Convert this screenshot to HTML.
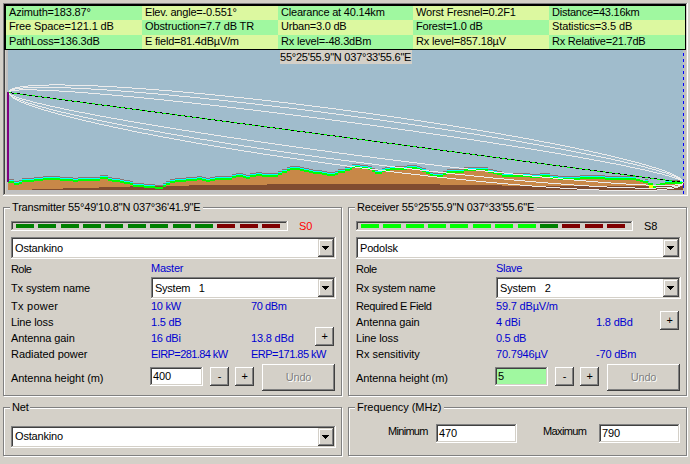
<!DOCTYPE html>
<html><head><meta charset="utf-8"><style>
html,body{margin:0;padding:0;}
body{width:690px;height:464px;overflow:hidden;position:relative;background:#d4d0c8;}
.t{position:absolute;white-space:pre;font-family:'Liberation Sans',sans-serif;font-size:11px;line-height:13px;letter-spacing:-0.18px}
</style></head><body>
<div style="position:absolute;left:3px;top:3px;width:685px;height:193px;background:#ffffff;"></div>
<div style="position:absolute;left:3px;top:3px;width:684px;height:192px;background:#808080;"></div>
<div style="position:absolute;left:4px;top:4px;width:683px;height:191px;background:#d4d0c8;"></div>
<div style="position:absolute;left:4px;top:4px;width:682px;height:190px;background:#404040;"></div>
<div style="position:absolute;left:5px;top:5px;width:681px;height:189px;background:#c0c0c0;"></div>
<div style="position:absolute;left:5px;top:5px;width:1px;height:189px;background:#d4d0c8;"></div>
<svg style="position:absolute;left:0;top:0" width="690" height="464" shape-rendering="crispEdges"><path fill="#a0bccc" d="M8 50h675v1h-675zM8 51h675v1h-675zM8 52h675v1h-675zM8 53h675v1h-675zM8 54h675v1h-675zM8 55h675v1h-675zM8 56h675v1h-675zM8 57h675v1h-675zM8 58h675v1h-675zM8 59h675v1h-675zM8 60h675v1h-675zM8 61h675v1h-675zM8 62h675v1h-675zM8 63h675v1h-675zM8 64h675v1h-675zM8 65h675v1h-675zM8 66h675v1h-675zM8 67h675v1h-675zM8 68h675v1h-675zM8 69h675v1h-675zM8 70h675v1h-675zM8 71h675v1h-675zM8 72h675v1h-675zM8 73h675v1h-675zM8 74h675v1h-675zM8 75h675v1h-675zM8 76h675v1h-675zM8 77h675v1h-675zM8 78h675v1h-675zM8 79h675v1h-675zM8 80h675v1h-675zM8 81h675v1h-675zM8 82h675v1h-675zM8 83h675v1h-675zM8 84h41v1h-41zM65 84h618v1h-618zM8 85h20v1h-20zM49 85h16v1h-16zM98 85h585v1h-585zM8 86h12v1h-12zM28 86h70v1h-70zM117 86h566v1h-566zM8 87h7v1h-7zM20 87h3v1h-3zM71 87h46v1h-46zM132 87h551v1h-551zM8 88h4v1h-4zM23 88h48v1h-48zM91 88h41v1h-41zM146 88h537v1h-537zM8 89h2v1h-2zM15 89h4v1h-4zM37 89h54v1h-54zM107 89h39v1h-39zM159 89h524v1h-524zM8 90h1v1h-1zM19 90h18v1h-18zM59 90h48v1h-48zM121 90h38v1h-38zM172 90h511v1h-511zM8 91h1v1h-1zM11 91h48v1h-48zM75 91h46v1h-46zM134 91h38v1h-38zM183 91h500v1h-500zM12 92h63v1h-63zM88 92h46v1h-46zM146 92h37v1h-37zM194 92h489v1h-489zM10 93h2v1h-2zM20 93h68v1h-68zM100 93h46v1h-46zM158 93h36v1h-36zM205 93h478v1h-478zM11 94h9v1h-9zM27 94h73v1h-73zM112 94h46v1h-46zM169 94h36v1h-36zM215 94h468v1h-468zM9 95h1v1h-1zM14 95h13v1h-13zM35 95h77v1h-77zM123 95h46v1h-46zM179 95h36v1h-36zM225 95h458v1h-458zM9 96h2v1h-2zM13 96h1v1h-1zM16 96h19v1h-19zM42 96h81v1h-81zM134 96h45v1h-45zM190 96h35v1h-35zM234 96h449v1h-449zM9 97h3v1h-3zM15 97h1v1h-1zM19 97h23v1h-23zM50 97h84v1h-84zM144 97h46v1h-46zM200 97h34v1h-34zM244 97h439v1h-439zM9 98h4v1h-4zM17 98h2v1h-2zM22 98h28v1h-28zM57 98h87v1h-87zM154 98h46v1h-46zM209 98h35v1h-35zM253 98h430v1h-430zM9 99h6v1h-6zM20 99h2v1h-2zM26 99h31v1h-31zM65 99h89v1h-89zM164 99h45v1h-45zM219 99h34v1h-34zM262 99h421v1h-421zM9 100h8v1h-8zM19 100h1v1h-1zM23 100h3v1h-3zM30 100h35v1h-35zM72 100h92v1h-92zM173 100h46v1h-46zM228 100h34v1h-34zM271 100h412v1h-412zM9 101h10v1h-10zM21 101h2v1h-2zM25 101h5v1h-5zM33 101h39v1h-39zM80 101h93v1h-93zM183 101h45v1h-45zM237 101h34v1h-34zM279 101h404v1h-404zM9 102h12v1h-12zM24 102h1v1h-1zM28 102h5v1h-5zM37 102h43v1h-43zM87 102h96v1h-96zM192 102h45v1h-45zM246 102h33v1h-33zM288 102h395v1h-395zM9 103h15v1h-15zM26 103h2v1h-2zM32 103h5v1h-5zM42 103h45v1h-45zM95 103h97v1h-97zM201 103h45v1h-45zM255 103h33v1h-33zM296 103h387v1h-387zM9 104h17v1h-17zM29 104h3v1h-3zM35 104h7v1h-7zM46 104h49v1h-49zM102 104h99v1h-99zM210 104h45v1h-45zM263 104h33v1h-33zM304 104h379v1h-379zM9 105h20v1h-20zM32 105h3v1h-3zM38 105h8v1h-8zM50 105h52v1h-52zM110 105h100v1h-100zM219 105h44v1h-44zM272 105h32v1h-32zM312 105h371v1h-371zM9 106h23v1h-23zM35 106h3v1h-3zM42 106h8v1h-8zM55 106h55v1h-55zM117 106h102v1h-102zM227 106h45v1h-45zM280 106h32v1h-32zM320 106h363v1h-363zM9 107h26v1h-26zM38 107h4v1h-4zM46 107h9v1h-9zM60 107h57v1h-57zM125 107h102v1h-102zM236 107h44v1h-44zM289 107h31v1h-31zM328 107h355v1h-355zM9 108h29v1h-29zM41 108h5v1h-5zM49 108h11v1h-11zM64 108h61v1h-61zM132 108h104v1h-104zM244 108h45v1h-45zM297 108h31v1h-31zM336 108h347v1h-347zM9 109h32v1h-32zM44 109h5v1h-5zM53 109h11v1h-11zM69 109h63v1h-63zM140 109h104v1h-104zM253 109h44v1h-44zM305 109h31v1h-31zM343 109h340v1h-340zM9 110h35v1h-35zM48 110h5v1h-5zM57 110h12v1h-12zM74 110h66v1h-66zM147 110h106v1h-106zM261 110h44v1h-44zM313 110h30v1h-30zM351 110h332v1h-332zM9 111h39v1h-39zM51 111h6v1h-6zM61 111h13v1h-13zM79 111h68v1h-68zM155 111h106v1h-106zM269 111h44v1h-44zM321 111h30v1h-30zM358 111h325v1h-325zM9 112h42v1h-42zM55 112h6v1h-6zM66 112h13v1h-13zM85 112h70v1h-70zM162 112h107v1h-107zM277 112h44v1h-44zM328 112h30v1h-30zM366 112h317v1h-317zM9 113h46v1h-46zM58 113h8v1h-8zM70 113h15v1h-15zM90 113h72v1h-72zM170 113h107v1h-107zM285 113h43v1h-43zM336 113h30v1h-30zM373 113h310v1h-310zM9 114h49v1h-49zM62 114h8v1h-8zM74 114h16v1h-16zM95 114h75v1h-75zM177 114h108v1h-108zM293 114h43v1h-43zM344 114h29v1h-29zM380 114h303v1h-303zM9 115h53v1h-53zM66 115h8v1h-8zM79 115h16v1h-16zM100 115h77v1h-77zM185 115h108v1h-108zM301 115h43v1h-43zM351 115h29v1h-29zM387 115h296v1h-296zM9 116h57v1h-57zM70 116h9v1h-9zM83 116h17v1h-17zM106 116h79v1h-79zM192 116h109v1h-109zM309 116h42v1h-42zM358 116h29v1h-29zM394 116h289v1h-289zM9 117h61v1h-61zM74 117h9v1h-9zM88 117h18v1h-18zM111 117h81v1h-81zM200 117h109v1h-109zM317 117h41v1h-41zM366 117h28v1h-28zM401 117h282v1h-282zM9 118h65v1h-65zM78 118h10v1h-10zM93 118h18v1h-18zM117 118h83v1h-83zM207 118h110v1h-110zM325 118h41v1h-41zM373 118h28v1h-28zM407 118h276v1h-276zM9 119h69v1h-69zM82 119h11v1h-11zM97 119h20v1h-20zM123 119h84v1h-84zM215 119h110v1h-110zM332 119h41v1h-41zM380 119h27v1h-27zM414 119h269v1h-269zM9 120h73v1h-73zM86 120h11v1h-11zM102 120h21v1h-21zM128 120h87v1h-87zM222 120h110v1h-110zM340 120h40v1h-40zM387 120h27v1h-27zM421 120h262v1h-262zM9 121h77v1h-77zM91 121h11v1h-11zM107 121h21v1h-21zM134 121h88v1h-88zM230 121h110v1h-110zM347 121h40v1h-40zM394 121h27v1h-27zM427 121h256v1h-256zM9 122h82v1h-82zM95 122h12v1h-12zM112 122h22v1h-22zM140 122h90v1h-90zM237 122h110v1h-110zM355 122h39v1h-39zM401 122h26v1h-26zM434 122h249v1h-249zM9 123h86v1h-86zM99 123h13v1h-13zM117 123h23v1h-23zM146 123h91v1h-91zM245 123h110v1h-110zM362 123h39v1h-39zM408 123h26v1h-26zM440 123h243v1h-243zM9 124h90v1h-90zM104 124h13v1h-13zM122 124h24v1h-24zM152 124h93v1h-93zM252 124h110v1h-110zM370 124h38v1h-38zM415 124h25v1h-25zM447 124h236v1h-236zM9 125h95v1h-95zM109 125h13v1h-13zM127 125h25v1h-25zM158 125h94v1h-94zM260 125h110v1h-110zM377 125h38v1h-38zM422 125h25v1h-25zM453 125h230v1h-230zM9 126h100v1h-100zM113 126h14v1h-14zM133 126h25v1h-25zM164 126h96v1h-96zM267 126h110v1h-110zM384 126h38v1h-38zM428 126h25v1h-25zM459 126h224v1h-224zM9 127h104v1h-104zM118 127h15v1h-15zM138 127h26v1h-26zM170 127h97v1h-97zM275 127h109v1h-109zM391 127h37v1h-37zM435 127h24v1h-24zM465 127h218v1h-218zM9 128h109v1h-109zM123 128h15v1h-15zM143 128h27v1h-27zM176 128h99v1h-99zM282 128h109v1h-109zM398 128h37v1h-37zM442 128h23v1h-23zM471 128h212v1h-212zM9 129h114v1h-114zM128 129h15v1h-15zM149 129h27v1h-27zM182 129h100v1h-100zM290 129h108v1h-108zM405 129h37v1h-37zM448 129h23v1h-23zM477 129h206v1h-206zM9 130h119v1h-119zM132 130h17v1h-17zM154 130h28v1h-28zM189 130h101v1h-101zM297 130h108v1h-108zM413 130h35v1h-35zM455 130h22v1h-22zM483 130h200v1h-200zM9 131h123v1h-123zM137 131h17v1h-17zM160 131h29v1h-29zM195 131h102v1h-102zM305 131h108v1h-108zM419 131h36v1h-36zM461 131h22v1h-22zM489 131h194v1h-194zM9 132h128v1h-128zM142 132h18v1h-18zM165 132h30v1h-30zM201 132h104v1h-104zM312 132h107v1h-107zM426 132h35v1h-35zM467 132h22v1h-22zM495 132h188v1h-188zM9 133h133v1h-133zM148 133h17v1h-17zM171 133h30v1h-30zM208 133h104v1h-104zM320 133h106v1h-106zM433 133h34v1h-34zM474 133h21v1h-21zM501 133h182v1h-182zM9 134h139v1h-139zM153 134h18v1h-18zM177 134h31v1h-31zM214 134h106v1h-106zM327 134h106v1h-106zM440 134h34v1h-34zM480 134h21v1h-21zM506 134h177v1h-177zM9 135h144v1h-144zM158 135h19v1h-19zM183 135h31v1h-31zM221 135h106v1h-106zM335 135h105v1h-105zM447 135h33v1h-33zM486 135h20v1h-20zM512 135h171v1h-171zM9 136h149v1h-149zM163 136h20v1h-20zM189 136h32v1h-32zM227 136h108v1h-108zM342 136h105v1h-105zM454 136h32v1h-32zM492 136h20v1h-20zM518 136h165v1h-165zM9 137h154v1h-154zM169 137h20v1h-20zM194 137h33v1h-33zM234 137h108v1h-108zM350 137h104v1h-104zM460 137h32v1h-32zM498 137h20v1h-20zM523 137h160v1h-160zM9 138h160v1h-160zM174 138h20v1h-20zM200 138h34v1h-34zM241 138h109v1h-109zM357 138h103v1h-103zM467 138h31v1h-31zM504 138h19v1h-19zM529 138h154v1h-154zM9 139h165v1h-165zM180 139h20v1h-20zM207 139h34v1h-34zM247 139h110v1h-110zM365 139h102v1h-102zM474 139h30v1h-30zM510 139h19v1h-19zM534 139h149v1h-149zM9 140h171v1h-171zM185 140h22v1h-22zM213 140h34v1h-34zM254 140h111v1h-111zM372 140h102v1h-102zM480 140h30v1h-30zM516 140h18v1h-18zM539 140h144v1h-144zM9 141h176v1h-176zM191 141h22v1h-22zM219 141h35v1h-35zM261 141h111v1h-111zM380 141h100v1h-100zM487 141h29v1h-29zM522 141h17v1h-17zM544 141h139v1h-139zM9 142h182v1h-182zM196 142h23v1h-23zM225 142h36v1h-36zM268 142h112v1h-112zM387 142h100v1h-100zM493 142h29v1h-29zM527 142h17v1h-17zM550 142h133v1h-133zM9 143h187v1h-187zM202 143h23v1h-23zM231 143h37v1h-37zM275 143h112v1h-112zM395 143h98v1h-98zM499 143h28v1h-28zM533 143h17v1h-17zM555 143h128v1h-128zM9 144h193v1h-193zM208 144h23v1h-23zM238 144h37v1h-37zM282 144h113v1h-113zM402 144h97v1h-97zM506 144h27v1h-27zM539 144h16v1h-16zM560 144h123v1h-123zM9 145h199v1h-199zM214 145h24v1h-24zM244 145h38v1h-38zM289 145h113v1h-113zM410 145h96v1h-96zM512 145h27v1h-27zM544 145h16v1h-16zM565 145h118v1h-118zM9 146h205v1h-205zM220 146h24v1h-24zM251 146h38v1h-38zM296 146h114v1h-114zM417 146h95v1h-95zM518 146h26v1h-26zM550 146h15v1h-15zM570 146h113v1h-113zM9 147h211v1h-211zM226 147h25v1h-25zM257 147h39v1h-39zM303 147h114v1h-114zM425 147h93v1h-93zM525 147h25v1h-25zM555 147h15v1h-15zM575 147h108v1h-108zM9 148h217v1h-217zM232 148h25v1h-25zM264 148h39v1h-39zM310 148h115v1h-115zM432 148h93v1h-93zM531 148h24v1h-24zM561 148h14v1h-14zM579 148h104v1h-104zM9 149h223v1h-223zM238 149h26v1h-26zM270 149h40v1h-40zM317 149h115v1h-115zM440 149h91v1h-91zM537 149h24v1h-24zM566 149h13v1h-13zM584 149h99v1h-99zM9 150h229v1h-229zM244 150h26v1h-26zM277 150h40v1h-40zM325 150h115v1h-115zM447 150h90v1h-90zM543 150h23v1h-23zM571 150h13v1h-13zM589 150h94v1h-94zM9 151h235v1h-235zM251 151h26v1h-26zM284 151h41v1h-41zM332 151h115v1h-115zM455 151h88v1h-88zM549 151h22v1h-22zM576 151h13v1h-13zM593 151h90v1h-90zM9 152h242v1h-242zM257 152h27v1h-27zM291 152h41v1h-41zM339 152h116v1h-116zM462 152h87v1h-87zM555 152h21v1h-21zM581 152h12v1h-12zM598 152h85v1h-85zM9 153h248v1h-248zM263 153h28v1h-28zM298 153h41v1h-41zM347 153h115v1h-115zM470 153h85v1h-85zM561 153h20v1h-20zM586 153h12v1h-12zM602 153h81v1h-81zM9 154h254v1h-254zM270 154h28v1h-28zM305 154h42v1h-42zM354 154h116v1h-116zM477 154h84v1h-84zM566 154h20v1h-20zM591 154h11v1h-11zM607 154h76v1h-76zM9 155h261v1h-261zM277 155h28v1h-28zM312 155h42v1h-42zM362 155h115v1h-115zM485 155h81v1h-81zM572 155h19v1h-19zM596 155h11v1h-11zM611 155h72v1h-72zM9 156h268v1h-268zM283 156h29v1h-29zM319 156h43v1h-43zM370 156h115v1h-115zM492 156h80v1h-80zM578 156h18v1h-18zM601 156h10v1h-10zM615 156h68v1h-68zM9 157h274v1h-274zM290 157h29v1h-29zM326 157h44v1h-44zM377 157h115v1h-115zM500 157h78v1h-78zM583 157h18v1h-18zM606 157h9v1h-9zM619 157h64v1h-64zM9 158h281v1h-281zM297 158h29v1h-29zM334 158h43v1h-43zM385 158h115v1h-115zM507 158h76v1h-76zM589 158h17v1h-17zM611 158h8v1h-8zM623 158h60v1h-60zM9 159h288v1h-288zM304 159h30v1h-30zM341 159h44v1h-44zM393 159h114v1h-114zM515 159h74v1h-74zM594 159h17v1h-17zM615 159h8v1h-8zM627 159h56v1h-56zM9 160h295v1h-295zM311 160h30v1h-30zM349 160h44v1h-44zM401 160h114v1h-114zM522 160h72v1h-72zM600 160h15v1h-15zM620 160h7v1h-7zM631 160h52v1h-52zM9 161h302v1h-302zM318 161h31v1h-31zM356 161h45v1h-45zM409 161h113v1h-113zM530 161h70v1h-70zM605 161h15v1h-15zM624 161h7v1h-7zM635 161h48v1h-48zM9 162h309v1h-309zM325 162h31v1h-31zM364 162h45v1h-45zM417 162h113v1h-113zM537 162h68v1h-68zM610 162h14v1h-14zM628 162h7v1h-7zM639 162h44v1h-44zM9 163h316v1h-316zM332 163h32v1h-32zM372 163h45v1h-45zM425 163h112v1h-112zM545 163h65v1h-65zM616 163h12v1h-12zM633 163h6v1h-6zM642 163h41v1h-41zM9 164h323v1h-323zM340 164h12v1h-12zM360 164h12v1h-12zM379 164h46v1h-46zM434 164h111v1h-111zM552 164h64v1h-64zM621 164h12v1h-12zM637 164h5v1h-5zM646 164h37v1h-37zM9 165h331v1h-331zM347 165h5v1h-5zM368 165h11v1h-11zM387 165h20v1h-20zM417 165h17v1h-17zM442 165h110v1h-110zM560 165h61v1h-61zM626 165h11v1h-11zM641 165h5v1h-5zM649 165h34v1h-34zM9 166h281v1h-281zM300 166h47v1h-47zM372 166h15v1h-15zM420 166h22v1h-22zM450 166h110v1h-110zM567 166h59v1h-59zM630 166h11v1h-11zM645 166h4v1h-4zM652 166h31v1h-31zM9 167h278v1h-278zM304 167h41v1h-41zM372 167h13v1h-13zM422 167h28v1h-28zM459 167h5v1h-5zM488 167h79v1h-79zM575 167h55v1h-55zM635 167h10v1h-10zM648 167h4v1h-4zM656 167h27v1h-27zM9 168h278v1h-278zM309 168h36v1h-36zM375 168h7v1h-7zM426 168h33v1h-33zM488 168h87v1h-87zM582 168h53v1h-53zM640 168h8v1h-8zM652 168h4v1h-4zM659 168h24v1h-24zM9 169h273v1h-273zM313 169h25v1h-25zM378 169h4v1h-4zM426 169h21v1h-21zM493 169h89v1h-89zM590 169h50v1h-50zM645 169h7v1h-7zM656 169h3v1h-3zM662 169h21v1h-21zM9 170h273v1h-273zM322 170h16v1h-16zM430 170h17v1h-17zM497 170h93v1h-93zM597 170h48v1h-48zM649 170h7v1h-7zM659 170h3v1h-3zM665 170h18v1h-18zM9 171h269v1h-269zM327 171h8v1h-8zM438 171h5v1h-5zM502 171h95v1h-95zM605 171h44v1h-44zM653 171h6v1h-6zM662 171h3v1h-3zM667 171h16v1h-16zM9 172h247v1h-247zM262 172h16v1h-16zM433 172h5v1h-5zM504 172h101v1h-101zM612 172h41v1h-41zM657 172h5v1h-5zM666 172h1v1h-1zM670 172h13v1h-13zM9 173h227v1h-227zM243 173h7v1h-7zM530 173h10v1h-10zM550 173h62v1h-62zM620 173h37v1h-37zM662 173h4v1h-4zM669 173h1v1h-1zM672 173h11v1h-11zM9 174h223v1h-223zM246 174h4v1h-4zM550 174h70v1h-70zM627 174h35v1h-35zM665 174h4v1h-4zM671 174h1v1h-1zM674 174h9v1h-9zM9 175h91v1h-91zM108 175h124v1h-124zM558 175h22v1h-22zM605 175h22v1h-22zM635 175h30v1h-30zM669 175h2v1h-2zM676 175h7v1h-7zM9 176h34v1h-34zM60 176h40v1h-40zM108 176h89v1h-89zM202 176h13v1h-13zM642 176h27v1h-27zM672 176h2v1h-2zM678 176h5v1h-5zM9 177h25v1h-25zM73 177h5v1h-5zM112 177h74v1h-74zM206 177h4v1h-4zM636 177h6v1h-6zM650 177h22v1h-22zM675 177h1v1h-1zM680 177h3v1h-3zM9 178h13v1h-13zM120 178h55v1h-55zM636 178h14v1h-14zM657 178h18v1h-18zM681 178h2v1h-2zM14 179h8v1h-8zM124 179h46v1h-46zM640 179h5v1h-5zM648 179h9v1h-9zM665 179h13v1h-13zM682 179h1v1h-1zM14 180h5v1h-5zM130 180h40v1h-40zM643 180h2v1h-2zM648 180h17v1h-17zM133 181h33v1h-33zM649 181h16v1h-16zM133 182h33v1h-33zM649 182h16v1h-16zM144 183h19v1h-19zM653 183h7v1h-7zM155 184h8v1h-8zM653 184h3v1h-3z"/><path fill="#8c7474" d="M352 164h8v1h-8zM360 165h8v1h-8zM407 165h10v1h-10zM290 166h10v1h-10zM368 166h4v1h-4zM395 166h12v1h-12zM417 166h3v1h-3zM287 167h3v1h-3zM300 167h4v1h-4zM345 167h5v1h-5zM385 167h5v1h-5zM420 167h2v1h-2zM464 167h24v1h-24zM304 168h5v1h-5zM372 168h3v1h-3zM382 168h3v1h-3zM422 168h4v1h-4zM282 169h5v1h-5zM309 169h4v1h-4zM338 169h7v1h-7zM447 169h17v1h-17zM488 169h5v1h-5zM313 170h9v1h-9zM375 170h3v1h-3zM429 170h1v1h-1zM493 170h4v1h-4zM278 171h4v1h-4zM322 171h5v1h-5zM335 171h3v1h-3zM443 171h4v1h-4zM497 171h5v1h-5zM256 172h6v1h-6zM327 172h8v1h-8zM430 172h3v1h-3zM236 173h7v1h-7zM250 173h6v1h-6zM262 173h16v1h-16zM433 173h10v1h-10zM502 173h2v1h-2zM513 173h17v1h-17zM540 173h10v1h-10zM232 174h4v1h-4zM243 174h3v1h-3zM530 174h10v1h-10zM100 175h8v1h-8zM246 175h4v1h-4zM550 175h8v1h-8zM580 175h25v1h-25zM43 176h17v1h-17zM197 176h5v1h-5zM215 176h17v1h-17zM558 176h22v1h-22zM605 176h30v1h-30zM34 177h9v1h-9zM60 177h13v1h-13zM78 177h22v1h-22zM108 177h4v1h-4zM186 177h11v1h-11zM202 177h4v1h-4zM210 177h5v1h-5zM22 178h12v1h-12zM73 178h5v1h-5zM112 178h8v1h-8zM175 178h11v1h-11zM206 178h4v1h-4zM9 179h5v1h-5zM120 179h4v1h-4zM170 179h5v1h-5zM645 179h3v1h-3zM19 180h3v1h-3zM124 180h6v1h-6zM672 180h8v1h-8zM14 181h5v1h-5zM130 181h3v1h-3zM166 181h4v1h-4zM648 181h1v1h-1zM133 183h11v1h-11zM163 183h3v1h-3zM144 184h11v1h-11zM155 185h8v1h-8z"/><path fill="#00ffff" d="M352 165h8v1h-8zM360 166h8v1h-8zM407 166h10v1h-10zM290 167h10v1h-10zM350 167h2v1h-2zM368 167h4v1h-4zM390 167h5v1h-5zM404 167h3v1h-3zM417 167h3v1h-3zM287 168h3v1h-3zM300 168h4v1h-4zM345 168h5v1h-5zM385 168h5v1h-5zM420 168h2v1h-2zM468 168h20v1h-20zM304 169h5v1h-5zM382 169h3v1h-3zM422 169h4v1h-4zM282 170h5v1h-5zM309 170h4v1h-4zM338 170h7v1h-7zM447 170h17v1h-17zM488 170h5v1h-5zM313 171h9v1h-9zM375 171h7v1h-7zM426 171h3v1h-3zM494 171h3v1h-3zM278 172h4v1h-4zM322 172h5v1h-5zM335 172h3v1h-3zM446 172h1v1h-1zM256 173h6v1h-6zM327 173h8v1h-8zM430 173h3v1h-3zM236 174h7v1h-7zM250 174h6v1h-6zM262 174h16v1h-16zM433 174h10v1h-10zM502 174h11v1h-11zM523 174h7v1h-7zM540 174h10v1h-10zM232 175h4v1h-4zM243 175h3v1h-3zM532 175h8v1h-8zM100 176h8v1h-8zM246 176h4v1h-4zM550 176h8v1h-8zM580 176h25v1h-25zM43 177h17v1h-17zM197 177h5v1h-5zM215 177h17v1h-17zM558 177h22v1h-22zM605 177h31v1h-31zM34 178h9v1h-9zM60 178h13v1h-13zM78 178h22v1h-22zM108 178h4v1h-4zM186 178h11v1h-11zM202 178h4v1h-4zM210 178h5v1h-5zM22 179h12v1h-12zM73 179h5v1h-5zM112 179h8v1h-8zM175 179h11v1h-11zM206 179h4v1h-4zM9 180h5v1h-5zM120 180h4v1h-4zM170 180h5v1h-5zM645 180h3v1h-3zM19 181h3v1h-3zM124 181h6v1h-6zM665 181h7v1h-7zM680 181h2v1h-2zM14 182h5v1h-5zM130 182h3v1h-3zM166 182h4v1h-4zM648 182h1v1h-1zM133 184h11v1h-11zM163 184h3v1h-3zM144 185h11v1h-11z"/><path fill="#c88848" d="M352 168h8v1h-8zM352 169h16v1h-16zM407 169h5v1h-5zM290 170h10v1h-10zM350 170h22v1h-22zM390 170h30v1h-30zM287 171h17v1h-17zM345 171h27v1h-27zM385 171h1v1h-1zM394 171h28v1h-28zM464 171h21v1h-21zM287 172h22v1h-22zM345 172h30v1h-30zM382 172h12v1h-12zM402 172h24v1h-24zM464 172h24v1h-24zM282 173h31v1h-31zM338 173h37v1h-37zM382 173h20v1h-20zM411 173h15v1h-15zM455 173h38v1h-38zM282 174h40v1h-40zM338 174h73v1h-73zM420 174h10v1h-10zM447 174h8v1h-8zM465 174h32v1h-32zM278 175h49v1h-49zM335 175h85v1h-85zM428 175h2v1h-2zM443 175h22v1h-22zM474 175h28v1h-28zM256 176h6v1h-6zM278 176h150v1h-150zM443 176h31v1h-31zM484 176h18v1h-18zM236 177h7v1h-7zM250 177h187v1h-187zM447 177h37v1h-37zM493 177h37v1h-37zM540 177h2v1h-2zM232 178h14v1h-14zM250 178h197v1h-197zM456 178h37v1h-37zM504 178h46v1h-46zM100 179h8v1h-8zM232 179h224v1h-224zM466 179h38v1h-38zM514 179h44v1h-44zM580 179h25v1h-25zM43 180h17v1h-17zM100 180h8v1h-8zM197 180h5v1h-5zM215 180h251v1h-251zM476 180h38v1h-38zM525 180h49v1h-49zM586 180h50v1h-50zM34 181h39v1h-39zM78 181h34v1h-34zM186 181h20v1h-20zM210 181h266v1h-266zM486 181h39v1h-39zM536 181h50v1h-50zM598 181h42v1h-42zM22 182h98v1h-98zM175 182h311v1h-311zM497 182h39v1h-39zM548 182h50v1h-50zM611 182h32v1h-32zM8 183h6v1h-6zM22 183h102v1h-102zM170 183h327v1h-327zM508 183h40v1h-40zM561 183h50v1h-50zM626 183h22v1h-22zM8 184h6v1h-6zM19 184h111v1h-111zM170 184h97v1h-97zM440 184h68v1h-68zM520 184h41v1h-41zM574 184h52v1h-52zM646 184h2v1h-2zM665 184h10v1h-10zM8 185h125v1h-125zM166 185h23v1h-23zM502 185h18v1h-18zM532 185h42v1h-42zM589 185h57v1h-57zM675 185h3v1h-3zM682 185h1v1h-1zM8 186h122v1h-122zM8 187h91v1h-91zM8 188h55v1h-55zM8 189h24v1h-24z"/><path fill="#00ff00" d="M9 92h2v1h-2zM14 93h3v1h-3zM20 94h3v1h-3zM26 94h1v1h-1zM27 95h2v1h-2zM32 95h3v1h-3zM38 96h3v1h-3zM44 97h3v1h-3zM50 98h3v1h-3zM56 98h1v1h-1zM57 99h2v1h-2zM62 99h3v1h-3zM68 100h3v1h-3zM74 101h3v1h-3zM80 102h3v1h-3zM86 102h1v1h-1zM87 103h2v1h-2zM92 103h3v1h-3zM98 104h3v1h-3zM104 105h3v1h-3zM110 106h3v1h-3zM116 106h1v1h-1zM117 107h2v1h-2zM121 107h3v1h-3zM127 108h3v1h-3zM133 109h3v1h-3zM139 109h1v1h-1zM140 110h2v1h-2zM145 110h2v1h-2zM147 111h1v1h-1zM151 111h3v1h-3zM157 112h3v1h-3zM163 113h3v1h-3zM169 113h1v1h-1zM170 114h2v1h-2zM175 114h2v1h-2zM177 115h1v1h-1zM181 115h3v1h-3zM187 116h3v1h-3zM193 117h3v1h-3zM199 117h1v1h-1zM200 118h2v1h-2zM205 118h2v1h-2zM207 119h1v1h-1zM211 119h3v1h-3zM217 120h3v1h-3zM223 121h3v1h-3zM229 121h1v1h-1zM230 122h1v1h-1zM234 122h3v1h-3zM240 123h3v1h-3zM246 124h3v1h-3zM252 125h3v1h-3zM258 125h2v1h-2zM260 126h1v1h-1zM264 126h3v1h-3zM270 127h3v1h-3zM276 128h3v1h-3zM282 129h3v1h-3zM288 129h2v1h-2zM290 130h1v1h-1zM294 130h3v1h-3zM300 131h3v1h-3zM306 132h3v1h-3zM312 133h3v1h-3zM318 133h2v1h-2zM320 134h1v1h-1zM324 134h3v1h-3zM330 135h3v1h-3zM336 136h3v1h-3zM342 137h2v1h-2zM347 137h3v1h-3zM353 138h3v1h-3zM359 139h3v1h-3zM365 140h3v1h-3zM371 140h1v1h-1zM372 141h2v1h-2zM377 141h3v1h-3zM383 142h3v1h-3zM389 143h3v1h-3zM395 144h3v1h-3zM401 144h1v1h-1zM402 145h2v1h-2zM407 145h3v1h-3zM413 146h3v1h-3zM419 147h3v1h-3zM425 148h3v1h-3zM431 148h1v1h-1zM432 149h2v1h-2zM437 149h3v1h-3zM443 150h3v1h-3zM449 151h3v1h-3zM454 151h1v1h-1zM455 152h2v1h-2zM460 152h2v1h-2zM462 153h1v1h-1zM466 153h3v1h-3zM472 154h3v1h-3zM478 155h3v1h-3zM484 155h1v1h-1zM485 156h2v1h-2zM490 156h2v1h-2zM492 157h1v1h-1zM496 157h3v1h-3zM502 158h3v1h-3zM508 159h3v1h-3zM514 159h1v1h-1zM515 160h2v1h-2zM520 160h2v1h-2zM522 161h1v1h-1zM526 161h3v1h-3zM532 162h3v1h-3zM538 163h3v1h-3zM544 163h1v1h-1zM545 164h2v1h-2zM550 164h2v1h-2zM552 165h1v1h-1zM556 165h3v1h-3zM355 166h5v1h-5zM562 166h2v1h-2zM352 167h3v1h-3zM362 167h6v1h-6zM407 167h10v1h-10zM567 167h3v1h-3zM573 167h2v1h-2zM290 168h10v1h-10zM350 168h2v1h-2zM360 168h2v1h-2zM370 168h2v1h-2zM390 168h14v1h-14zM412 168h8v1h-8zM575 168h1v1h-1zM579 168h3v1h-3zM287 169h17v1h-17zM345 169h7v1h-7zM368 169h2v1h-2zM385 169h22v1h-22zM420 169h2v1h-2zM464 169h4v1h-4zM476 169h12v1h-12zM585 169h3v1h-3zM287 170h3v1h-3zM300 170h9v1h-9zM345 170h5v1h-5zM372 170h3v1h-3zM386 170h4v1h-4zM464 170h12v1h-12zM485 170h3v1h-3zM591 170h3v1h-3zM282 171h5v1h-5zM304 171h9v1h-9zM338 171h7v1h-7zM372 171h3v1h-3zM382 171h3v1h-3zM422 171h4v1h-4zM447 171h17v1h-17zM597 171h3v1h-3zM603 171h2v1h-2zM282 172h5v1h-5zM309 172h13v1h-13zM338 172h7v1h-7zM375 172h7v1h-7zM426 172h4v1h-4zM447 172h17v1h-17zM488 172h6v1h-6zM605 172h1v1h-1zM609 172h3v1h-3zM278 173h4v1h-4zM313 173h14v1h-14zM335 173h3v1h-3zM375 173h7v1h-7zM426 173h4v1h-4zM443 173h3v1h-3zM493 173h9v1h-9zM615 173h3v1h-3zM256 174h6v1h-6zM278 174h4v1h-4zM322 174h16v1h-16zM430 174h3v1h-3zM443 174h4v1h-4zM497 174h5v1h-5zM621 174h3v1h-3zM236 175h7v1h-7zM250 175h28v1h-28zM327 175h8v1h-8zM430 175h13v1h-13zM502 175h21v1h-21zM540 175h10v1h-10zM627 175h3v1h-3zM633 175h2v1h-2zM232 176h14v1h-14zM250 176h6v1h-6zM262 176h16v1h-16zM437 176h6v1h-6zM502 176h30v1h-30zM542 176h8v1h-8zM635 176h1v1h-1zM639 176h3v1h-3zM100 177h8v1h-8zM232 177h4v1h-4zM243 177h7v1h-7zM530 177h10v1h-10zM553 177h5v1h-5zM580 177h25v1h-25zM645 177h3v1h-3zM43 178h17v1h-17zM100 178h8v1h-8zM197 178h5v1h-5zM215 178h17v1h-17zM246 178h4v1h-4zM550 178h3v1h-3zM563 178h73v1h-73zM651 178h3v1h-3zM34 179h39v1h-39zM78 179h22v1h-22zM108 179h4v1h-4zM186 179h20v1h-20zM210 179h22v1h-22zM558 179h5v1h-5zM574 179h6v1h-6zM605 179h35v1h-35zM657 179h3v1h-3zM663 179h2v1h-2zM22 180h21v1h-21zM60 180h40v1h-40zM108 180h12v1h-12zM175 180h22v1h-22zM202 180h13v1h-13zM636 180h7v1h-7zM665 180h1v1h-1zM669 180h3v1h-3zM9 181h5v1h-5zM22 181h12v1h-12zM73 181h5v1h-5zM112 181h12v1h-12zM170 181h16v1h-16zM206 181h4v1h-4zM640 181h8v1h-8zM675 181h2v1h-2zM8 182h6v1h-6zM19 182h3v1h-3zM120 182h10v1h-10zM170 182h5v1h-5zM643 182h5v1h-5zM665 182h18v1h-18zM14 183h8v1h-8zM124 183h9v1h-9zM166 183h4v1h-4zM648 183h5v1h-5zM660 183h22v1h-22zM14 184h5v1h-5zM130 184h3v1h-3zM166 184h4v1h-4zM648 184h5v1h-5zM656 184h9v1h-9zM133 185h11v1h-11zM163 185h3v1h-3zM133 186h22v1h-22zM163 186h3v1h-3zM653 186h3v1h-3zM144 187h19v1h-19zM653 187h3v1h-3zM155 188h8v1h-8z"/><path fill="#804c30" d="M267 184h173v1h-173zM189 185h313v1h-313zM130 186h3v1h-3zM155 186h8v1h-8zM166 186h366v1h-366zM546 186h43v1h-43zM607 186h42v1h-42zM656 186h16v1h-16zM680 186h3v1h-3zM99 187h45v1h-45zM163 187h383v1h-383zM560 187h47v1h-47zM635 187h14v1h-14zM672 187h2v1h-2zM678 187h5v1h-5zM63 188h92v1h-92zM163 188h397v1h-397zM577 188h58v1h-58zM656 188h11v1h-11zM674 188h9v1h-9zM32 189h545v1h-545zM599 189h58v1h-58zM667 189h16v1h-16z"/><path fill="#ececec" d="M49 84h16v1h-16zM28 85h21v1h-21zM65 85h33v1h-33zM20 86h8v1h-8zM98 86h19v1h-19zM15 87h5v1h-5zM23 87h48v1h-48zM117 87h15v1h-15zM12 88h11v1h-11zM71 88h20v1h-20zM132 88h14v1h-14zM10 89h5v1h-5zM19 89h18v1h-18zM91 89h16v1h-16zM146 89h13v1h-13zM9 90h10v1h-10zM37 90h22v1h-22zM107 90h14v1h-14zM159 90h13v1h-13zM9 91h2v1h-2zM59 91h16v1h-16zM121 91h13v1h-13zM172 91h11v1h-11zM75 92h13v1h-13zM134 92h12v1h-12zM183 92h11v1h-11zM9 93h1v1h-1zM88 93h12v1h-12zM146 93h12v1h-12zM194 93h11v1h-11zM9 94h2v1h-2zM100 94h12v1h-12zM158 94h11v1h-11zM205 94h10v1h-10zM10 95h4v1h-4zM112 95h11v1h-11zM169 95h10v1h-10zM215 95h10v1h-10zM11 96h2v1h-2zM14 96h2v1h-2zM123 96h11v1h-11zM179 96h11v1h-11zM225 96h9v1h-9zM12 97h3v1h-3zM16 97h3v1h-3zM134 97h10v1h-10zM190 97h10v1h-10zM234 97h10v1h-10zM13 98h4v1h-4zM19 98h3v1h-3zM144 98h10v1h-10zM200 98h9v1h-9zM244 98h9v1h-9zM15 99h5v1h-5zM22 99h4v1h-4zM154 99h10v1h-10zM209 99h10v1h-10zM253 99h9v1h-9zM17 100h2v1h-2zM20 100h3v1h-3zM26 100h4v1h-4zM164 100h9v1h-9zM219 100h9v1h-9zM262 100h9v1h-9zM19 101h2v1h-2zM23 101h2v1h-2zM30 101h3v1h-3zM173 101h10v1h-10zM228 101h9v1h-9zM271 101h8v1h-8zM21 102h3v1h-3zM25 102h3v1h-3zM33 102h4v1h-4zM183 102h9v1h-9zM237 102h9v1h-9zM279 102h9v1h-9zM24 103h2v1h-2zM28 103h4v1h-4zM37 103h5v1h-5zM192 103h9v1h-9zM246 103h9v1h-9zM288 103h8v1h-8zM26 104h3v1h-3zM32 104h3v1h-3zM42 104h4v1h-4zM201 104h9v1h-9zM255 104h8v1h-8zM296 104h8v1h-8zM29 105h3v1h-3zM35 105h3v1h-3zM46 105h4v1h-4zM210 105h9v1h-9zM263 105h9v1h-9zM304 105h8v1h-8zM32 106h3v1h-3zM38 106h4v1h-4zM50 106h5v1h-5zM219 106h8v1h-8zM272 106h8v1h-8zM312 106h8v1h-8zM35 107h3v1h-3zM42 107h4v1h-4zM55 107h5v1h-5zM227 107h9v1h-9zM280 107h9v1h-9zM320 107h8v1h-8zM38 108h3v1h-3zM46 108h3v1h-3zM60 108h4v1h-4zM236 108h8v1h-8zM289 108h8v1h-8zM328 108h8v1h-8zM41 109h3v1h-3zM49 109h4v1h-4zM64 109h5v1h-5zM244 109h9v1h-9zM297 109h8v1h-8zM336 109h7v1h-7zM44 110h4v1h-4zM53 110h4v1h-4zM69 110h5v1h-5zM253 110h8v1h-8zM305 110h8v1h-8zM343 110h8v1h-8zM48 111h3v1h-3zM57 111h4v1h-4zM74 111h5v1h-5zM261 111h8v1h-8zM313 111h8v1h-8zM351 111h7v1h-7zM51 112h4v1h-4zM61 112h5v1h-5zM79 112h6v1h-6zM269 112h8v1h-8zM321 112h7v1h-7zM358 112h8v1h-8zM55 113h3v1h-3zM66 113h4v1h-4zM85 113h5v1h-5zM277 113h8v1h-8zM328 113h8v1h-8zM366 113h7v1h-7zM58 114h4v1h-4zM70 114h4v1h-4zM90 114h5v1h-5zM285 114h8v1h-8zM336 114h8v1h-8zM373 114h7v1h-7zM62 115h4v1h-4zM74 115h5v1h-5zM95 115h5v1h-5zM293 115h8v1h-8zM344 115h7v1h-7zM380 115h7v1h-7zM66 116h4v1h-4zM79 116h4v1h-4zM100 116h6v1h-6zM301 116h8v1h-8zM351 116h7v1h-7zM387 116h7v1h-7zM70 117h4v1h-4zM83 117h5v1h-5zM106 117h5v1h-5zM309 117h8v1h-8zM358 117h8v1h-8zM394 117h7v1h-7zM74 118h4v1h-4zM88 118h5v1h-5zM111 118h6v1h-6zM317 118h8v1h-8zM366 118h7v1h-7zM401 118h6v1h-6zM78 119h4v1h-4zM93 119h4v1h-4zM117 119h6v1h-6zM325 119h7v1h-7zM373 119h7v1h-7zM407 119h7v1h-7zM82 120h4v1h-4zM97 120h5v1h-5zM123 120h5v1h-5zM332 120h8v1h-8zM380 120h7v1h-7zM414 120h7v1h-7zM86 121h5v1h-5zM102 121h5v1h-5zM128 121h6v1h-6zM340 121h7v1h-7zM387 121h7v1h-7zM421 121h6v1h-6zM91 122h4v1h-4zM107 122h5v1h-5zM134 122h6v1h-6zM347 122h8v1h-8zM394 122h7v1h-7zM427 122h7v1h-7zM95 123h4v1h-4zM112 123h5v1h-5zM140 123h6v1h-6zM355 123h7v1h-7zM401 123h7v1h-7zM434 123h6v1h-6zM99 124h5v1h-5zM117 124h5v1h-5zM146 124h6v1h-6zM362 124h8v1h-8zM408 124h7v1h-7zM440 124h7v1h-7zM104 125h5v1h-5zM122 125h5v1h-5zM152 125h6v1h-6zM370 125h7v1h-7zM415 125h7v1h-7zM447 125h6v1h-6zM109 126h4v1h-4zM127 126h6v1h-6zM158 126h6v1h-6zM377 126h7v1h-7zM422 126h6v1h-6zM453 126h6v1h-6zM113 127h5v1h-5zM133 127h5v1h-5zM164 127h6v1h-6zM384 127h7v1h-7zM428 127h7v1h-7zM459 127h6v1h-6zM118 128h5v1h-5zM138 128h5v1h-5zM170 128h6v1h-6zM391 128h7v1h-7zM435 128h7v1h-7zM465 128h6v1h-6zM123 129h5v1h-5zM143 129h6v1h-6zM176 129h6v1h-6zM398 129h7v1h-7zM442 129h6v1h-6zM471 129h6v1h-6zM128 130h4v1h-4zM149 130h5v1h-5zM182 130h7v1h-7zM405 130h8v1h-8zM448 130h7v1h-7zM477 130h6v1h-6zM132 131h5v1h-5zM154 131h6v1h-6zM189 131h6v1h-6zM413 131h6v1h-6zM455 131h6v1h-6zM483 131h6v1h-6zM137 132h5v1h-5zM160 132h5v1h-5zM195 132h6v1h-6zM419 132h7v1h-7zM461 132h6v1h-6zM489 132h6v1h-6zM142 133h6v1h-6zM165 133h6v1h-6zM201 133h7v1h-7zM426 133h7v1h-7zM467 133h7v1h-7zM495 133h6v1h-6zM148 134h5v1h-5zM171 134h6v1h-6zM208 134h6v1h-6zM433 134h7v1h-7zM474 134h6v1h-6zM501 134h5v1h-5zM153 135h5v1h-5zM177 135h6v1h-6zM214 135h7v1h-7zM440 135h7v1h-7zM480 135h6v1h-6zM506 135h6v1h-6zM158 136h5v1h-5zM183 136h6v1h-6zM221 136h6v1h-6zM447 136h7v1h-7zM486 136h6v1h-6zM512 136h6v1h-6zM163 137h6v1h-6zM189 137h5v1h-5zM227 137h7v1h-7zM454 137h6v1h-6zM492 137h6v1h-6zM518 137h5v1h-5zM169 138h5v1h-5zM194 138h6v1h-6zM234 138h7v1h-7zM460 138h7v1h-7zM498 138h6v1h-6zM523 138h6v1h-6zM174 139h6v1h-6zM200 139h7v1h-7zM241 139h6v1h-6zM467 139h7v1h-7zM504 139h6v1h-6zM529 139h5v1h-5zM180 140h5v1h-5zM207 140h6v1h-6zM247 140h7v1h-7zM474 140h6v1h-6zM510 140h6v1h-6zM534 140h5v1h-5zM185 141h6v1h-6zM213 141h6v1h-6zM254 141h7v1h-7zM480 141h7v1h-7zM516 141h6v1h-6zM539 141h5v1h-5zM191 142h5v1h-5zM219 142h6v1h-6zM261 142h7v1h-7zM487 142h6v1h-6zM522 142h5v1h-5zM544 142h6v1h-6zM196 143h6v1h-6zM225 143h6v1h-6zM268 143h7v1h-7zM493 143h6v1h-6zM527 143h6v1h-6zM550 143h5v1h-5zM202 144h6v1h-6zM231 144h7v1h-7zM275 144h7v1h-7zM499 144h7v1h-7zM533 144h6v1h-6zM555 144h5v1h-5zM208 145h6v1h-6zM238 145h6v1h-6zM282 145h7v1h-7zM506 145h6v1h-6zM539 145h5v1h-5zM560 145h5v1h-5zM214 146h6v1h-6zM244 146h7v1h-7zM289 146h7v1h-7zM512 146h6v1h-6zM544 146h6v1h-6zM565 146h5v1h-5zM220 147h6v1h-6zM251 147h6v1h-6zM296 147h7v1h-7zM518 147h7v1h-7zM550 147h5v1h-5zM570 147h5v1h-5zM226 148h6v1h-6zM257 148h7v1h-7zM303 148h7v1h-7zM525 148h6v1h-6zM555 148h6v1h-6zM575 148h4v1h-4zM232 149h6v1h-6zM264 149h6v1h-6zM310 149h7v1h-7zM531 149h6v1h-6zM561 149h5v1h-5zM579 149h5v1h-5zM238 150h6v1h-6zM270 150h7v1h-7zM317 150h8v1h-8zM537 150h6v1h-6zM566 150h5v1h-5zM584 150h5v1h-5zM244 151h7v1h-7zM277 151h7v1h-7zM325 151h7v1h-7zM543 151h6v1h-6zM571 151h5v1h-5zM589 151h4v1h-4zM251 152h6v1h-6zM284 152h7v1h-7zM332 152h7v1h-7zM549 152h6v1h-6zM576 152h5v1h-5zM593 152h5v1h-5zM257 153h6v1h-6zM291 153h7v1h-7zM339 153h8v1h-8zM555 153h6v1h-6zM581 153h5v1h-5zM598 153h4v1h-4zM263 154h7v1h-7zM298 154h7v1h-7zM347 154h7v1h-7zM561 154h5v1h-5zM586 154h5v1h-5zM602 154h5v1h-5zM270 155h7v1h-7zM305 155h7v1h-7zM354 155h8v1h-8zM566 155h6v1h-6zM591 155h5v1h-5zM607 155h4v1h-4zM277 156h6v1h-6zM312 156h7v1h-7zM362 156h8v1h-8zM572 156h6v1h-6zM596 156h5v1h-5zM611 156h4v1h-4zM283 157h7v1h-7zM319 157h7v1h-7zM370 157h7v1h-7zM578 157h5v1h-5zM601 157h5v1h-5zM615 157h4v1h-4zM290 158h7v1h-7zM326 158h8v1h-8zM377 158h8v1h-8zM583 158h6v1h-6zM606 158h5v1h-5zM619 158h4v1h-4zM297 159h7v1h-7zM334 159h7v1h-7zM385 159h8v1h-8zM589 159h5v1h-5zM611 159h4v1h-4zM623 159h4v1h-4zM304 160h7v1h-7zM341 160h8v1h-8zM393 160h8v1h-8zM594 160h6v1h-6zM615 160h5v1h-5zM627 160h4v1h-4zM311 161h7v1h-7zM349 161h7v1h-7zM401 161h8v1h-8zM600 161h5v1h-5zM620 161h4v1h-4zM631 161h4v1h-4zM318 162h7v1h-7zM356 162h8v1h-8zM409 162h8v1h-8zM605 162h5v1h-5zM624 162h4v1h-4zM635 162h4v1h-4zM325 163h7v1h-7zM364 163h8v1h-8zM417 163h8v1h-8zM610 163h6v1h-6zM628 163h5v1h-5zM639 163h3v1h-3zM332 164h8v1h-8zM372 164h7v1h-7zM425 164h9v1h-9zM616 164h5v1h-5zM633 164h4v1h-4zM642 164h4v1h-4zM340 165h7v1h-7zM379 165h8v1h-8zM434 165h8v1h-8zM621 165h5v1h-5zM637 165h4v1h-4zM646 165h3v1h-3zM347 166h8v1h-8zM387 166h8v1h-8zM442 166h8v1h-8zM626 166h4v1h-4zM641 166h4v1h-4zM649 166h3v1h-3zM355 167h7v1h-7zM395 167h9v1h-9zM450 167h9v1h-9zM630 167h5v1h-5zM645 167h3v1h-3zM652 167h4v1h-4zM362 168h8v1h-8zM404 168h8v1h-8zM459 168h9v1h-9zM635 168h5v1h-5zM648 168h4v1h-4zM656 168h3v1h-3zM370 169h8v1h-8zM412 169h8v1h-8zM468 169h8v1h-8zM640 169h5v1h-5zM652 169h4v1h-4zM659 169h3v1h-3zM378 170h8v1h-8zM420 170h9v1h-9zM476 170h9v1h-9zM645 170h4v1h-4zM656 170h3v1h-3zM662 170h3v1h-3zM386 171h8v1h-8zM429 171h9v1h-9zM485 171h9v1h-9zM649 171h4v1h-4zM659 171h3v1h-3zM665 171h2v1h-2zM394 172h8v1h-8zM438 172h8v1h-8zM494 172h10v1h-10zM653 172h4v1h-4zM662 172h4v1h-4zM667 172h3v1h-3zM402 173h9v1h-9zM446 173h9v1h-9zM504 173h9v1h-9zM657 173h5v1h-5zM666 173h3v1h-3zM670 173h2v1h-2zM411 174h9v1h-9zM455 174h10v1h-10zM513 174h10v1h-10zM662 174h3v1h-3zM669 174h2v1h-2zM672 174h2v1h-2zM420 175h8v1h-8zM465 175h9v1h-9zM523 175h9v1h-9zM665 175h4v1h-4zM671 175h5v1h-5zM428 176h9v1h-9zM474 176h10v1h-10zM532 176h10v1h-10zM669 176h3v1h-3zM674 176h4v1h-4zM437 177h10v1h-10zM484 177h9v1h-9zM542 177h11v1h-11zM672 177h3v1h-3zM676 177h4v1h-4zM447 178h9v1h-9zM493 178h11v1h-11zM553 178h10v1h-10zM675 178h6v1h-6zM456 179h10v1h-10zM504 179h10v1h-10zM563 179h11v1h-11zM678 179h4v1h-4zM466 180h10v1h-10zM514 180h11v1h-11zM574 180h12v1h-12zM680 180h3v1h-3zM476 181h10v1h-10zM525 181h11v1h-11zM586 181h12v1h-12zM682 181h1v1h-1zM486 182h11v1h-11zM536 182h12v1h-12zM598 182h13v1h-13zM497 183h11v1h-11zM548 183h13v1h-13zM611 183h15v1h-15zM682 183h1v1h-1zM508 184h12v1h-12zM561 184h13v1h-13zM626 184h20v1h-20zM675 184h8v1h-8zM520 185h12v1h-12zM574 185h15v1h-15zM646 185h3v1h-3zM653 185h22v1h-22zM678 185h4v1h-4zM532 186h14v1h-14zM589 186h18v1h-18zM672 186h8v1h-8zM546 187h14v1h-14zM607 187h28v1h-28zM656 187h16v1h-16zM674 187h4v1h-4zM560 188h17v1h-17zM635 188h21v1h-21zM667 188h7v1h-7zM577 189h22v1h-22zM657 189h10v1h-10zM599 190h58v1h-58z"/><path fill="#000000" d="M11 92h1v1h-1zM12 93h2v1h-2zM17 93h3v1h-3zM23 94h3v1h-3zM29 95h3v1h-3zM35 96h3v1h-3zM41 96h1v1h-1zM42 97h2v1h-2zM47 97h3v1h-3zM53 98h3v1h-3zM59 99h3v1h-3zM65 100h3v1h-3zM71 100h1v1h-1zM72 101h2v1h-2zM77 101h3v1h-3zM83 102h3v1h-3zM89 103h3v1h-3zM95 104h3v1h-3zM101 104h1v1h-1zM102 105h2v1h-2zM107 105h3v1h-3zM113 106h3v1h-3zM119 107h2v1h-2zM124 107h1v1h-1zM125 108h2v1h-2zM130 108h2v1h-2zM132 109h1v1h-1zM136 109h3v1h-3zM142 110h3v1h-3zM148 111h3v1h-3zM154 111h1v1h-1zM155 112h2v1h-2zM160 112h2v1h-2zM162 113h1v1h-1zM166 113h3v1h-3zM172 114h3v1h-3zM178 115h3v1h-3zM184 115h1v1h-1zM185 116h2v1h-2zM190 116h2v1h-2zM192 117h1v1h-1zM196 117h3v1h-3zM202 118h3v1h-3zM208 119h3v1h-3zM214 119h1v1h-1zM215 120h2v1h-2zM220 120h2v1h-2zM222 121h1v1h-1zM226 121h3v1h-3zM231 122h3v1h-3zM237 123h3v1h-3zM243 123h2v1h-2zM245 124h1v1h-1zM249 124h3v1h-3zM255 125h3v1h-3zM261 126h3v1h-3zM267 127h3v1h-3zM273 127h2v1h-2zM275 128h1v1h-1zM279 128h3v1h-3zM285 129h3v1h-3zM291 130h3v1h-3zM297 131h3v1h-3zM303 131h2v1h-2zM305 132h1v1h-1zM309 132h3v1h-3zM315 133h3v1h-3zM321 134h3v1h-3zM327 135h3v1h-3zM333 135h2v1h-2zM335 136h1v1h-1zM339 136h3v1h-3zM344 137h3v1h-3zM350 138h3v1h-3zM356 138h1v1h-1zM357 139h2v1h-2zM362 139h3v1h-3zM368 140h3v1h-3zM374 141h3v1h-3zM380 142h3v1h-3zM386 142h1v1h-1zM387 143h2v1h-2zM392 143h3v1h-3zM398 144h3v1h-3zM404 145h3v1h-3zM410 146h3v1h-3zM416 146h1v1h-1zM417 147h2v1h-2zM422 147h3v1h-3zM428 148h3v1h-3zM434 149h3v1h-3zM440 150h3v1h-3zM446 150h1v1h-1zM447 151h2v1h-2zM452 151h2v1h-2zM457 152h3v1h-3zM463 153h3v1h-3zM469 153h1v1h-1zM470 154h2v1h-2zM475 154h2v1h-2zM477 155h1v1h-1zM481 155h3v1h-3zM487 156h3v1h-3zM493 157h3v1h-3zM499 157h1v1h-1zM500 158h2v1h-2zM505 158h2v1h-2zM507 159h1v1h-1zM511 159h3v1h-3zM517 160h3v1h-3zM523 161h3v1h-3zM529 161h1v1h-1zM530 162h2v1h-2zM535 162h2v1h-2zM537 163h1v1h-1zM541 163h3v1h-3zM547 164h3v1h-3zM553 165h3v1h-3zM559 165h1v1h-1zM560 166h2v1h-2zM564 166h3v1h-3zM570 167h3v1h-3zM576 168h3v1h-3zM582 169h3v1h-3zM588 169h2v1h-2zM590 170h1v1h-1zM594 170h3v1h-3zM600 171h3v1h-3zM606 172h3v1h-3zM612 173h3v1h-3zM618 173h2v1h-2zM620 174h1v1h-1zM624 174h3v1h-3zM630 175h3v1h-3zM636 176h3v1h-3zM642 177h3v1h-3zM648 177h2v1h-2zM650 178h1v1h-1zM654 178h3v1h-3zM660 179h3v1h-3zM666 180h3v1h-3zM672 181h3v1h-3zM677 181h3v1h-3z"/><path fill="#800080" d="M7 92h2v1h-2zM7 93h2v1h-2zM7 94h2v1h-2zM7 95h2v1h-2zM7 96h2v1h-2zM7 97h2v1h-2zM7 98h2v1h-2zM7 99h2v1h-2zM7 100h2v1h-2zM7 101h2v1h-2zM7 102h2v1h-2zM7 103h2v1h-2zM7 104h2v1h-2zM7 105h2v1h-2zM7 106h2v1h-2zM7 107h2v1h-2zM7 108h2v1h-2zM7 109h2v1h-2zM7 110h2v1h-2zM7 111h2v1h-2zM7 112h2v1h-2zM7 113h2v1h-2zM7 114h2v1h-2zM7 115h2v1h-2zM7 116h2v1h-2zM7 117h2v1h-2zM7 118h2v1h-2zM7 119h2v1h-2zM7 120h2v1h-2zM7 121h2v1h-2zM7 122h2v1h-2zM7 123h2v1h-2zM7 124h2v1h-2zM7 125h2v1h-2zM7 126h2v1h-2zM7 127h2v1h-2zM7 128h2v1h-2zM7 129h2v1h-2zM7 130h2v1h-2zM7 131h2v1h-2zM7 132h2v1h-2zM7 133h2v1h-2zM7 134h2v1h-2zM7 135h2v1h-2zM7 136h2v1h-2zM7 137h2v1h-2zM7 138h2v1h-2zM7 139h2v1h-2zM7 140h2v1h-2zM7 141h2v1h-2zM7 142h2v1h-2zM7 143h2v1h-2zM7 144h2v1h-2zM7 145h2v1h-2zM7 146h2v1h-2zM7 147h2v1h-2zM7 148h2v1h-2zM7 149h2v1h-2zM7 150h2v1h-2zM7 151h2v1h-2zM7 152h2v1h-2zM7 153h2v1h-2zM7 154h2v1h-2zM7 155h2v1h-2zM7 156h2v1h-2zM7 157h2v1h-2zM7 158h2v1h-2zM7 159h2v1h-2zM7 160h2v1h-2zM7 161h2v1h-2zM7 162h2v1h-2zM7 163h2v1h-2zM7 164h2v1h-2zM7 165h2v1h-2zM7 166h2v1h-2zM7 167h2v1h-2zM7 168h2v1h-2zM7 169h2v1h-2zM7 170h2v1h-2zM7 171h2v1h-2zM7 172h2v1h-2zM7 173h2v1h-2zM7 174h2v1h-2zM7 175h2v1h-2zM7 176h2v1h-2zM7 177h2v1h-2zM7 178h2v1h-2zM7 179h2v1h-2zM7 180h2v1h-2zM7 181h2v1h-2zM683 183h1v1h-1zM683 184h1v1h-1z"/><path fill="#ffff00" d="M649 185h4v1h-4zM649 186h4v1h-4zM649 187h4v1h-4z"/><path fill="#0000ff" d="M683 53h1v1h-1zM683 54h1v1h-1zM683 55h1v1h-1zM683 59h1v1h-1zM683 60h1v1h-1zM683 61h1v1h-1zM683 65h1v1h-1zM683 66h1v1h-1zM683 67h1v1h-1zM683 71h1v1h-1zM683 72h1v1h-1zM683 73h1v1h-1zM683 77h1v1h-1zM683 78h1v1h-1zM683 79h1v1h-1zM683 83h1v1h-1zM683 84h1v1h-1zM683 85h1v1h-1zM683 89h1v1h-1zM683 90h1v1h-1zM683 91h1v1h-1zM683 95h1v1h-1zM683 96h1v1h-1zM683 97h1v1h-1zM683 101h1v1h-1zM683 102h1v1h-1zM683 103h1v1h-1zM683 107h1v1h-1zM683 108h1v1h-1zM683 109h1v1h-1zM683 113h1v1h-1zM683 114h1v1h-1zM683 115h1v1h-1zM683 119h1v1h-1zM683 120h1v1h-1zM683 121h1v1h-1zM683 125h1v1h-1zM683 126h1v1h-1zM683 127h1v1h-1zM683 131h1v1h-1zM683 132h1v1h-1zM683 133h1v1h-1zM683 137h1v1h-1zM683 138h1v1h-1zM683 139h1v1h-1zM683 143h1v1h-1zM683 144h1v1h-1zM683 145h1v1h-1zM683 149h1v1h-1zM683 150h1v1h-1zM683 151h1v1h-1zM683 155h1v1h-1zM683 156h1v1h-1zM683 157h1v1h-1zM683 161h1v1h-1zM683 162h1v1h-1zM683 163h1v1h-1zM683 167h1v1h-1zM683 168h1v1h-1zM683 169h1v1h-1zM683 173h1v1h-1zM683 174h1v1h-1zM683 175h1v1h-1zM683 179h1v1h-1zM683 180h1v1h-1zM683 181h1v1h-1zM683 185h1v1h-1zM683 186h1v1h-1zM683 187h1v1h-1zM683 191h1v1h-1zM683 192h1v1h-1zM683 193h1v1h-1z"/></svg>
<div style="position:absolute;left:4px;top:4px;width:682px;height:46px;background:#000;"></div>
<div style="position:absolute;left:6px;top:6px;width:136px;height:14px;background:#a0f8a0;"></div>
<div id="t0" class="t" style="left:9px;top:6px;color:#000;letter-spacing:-0.165px;">Azimuth=183.87°</div>
<div style="position:absolute;left:142px;top:6px;width:136px;height:14px;background:#dcf8a0;"></div>
<div id="t1" class="t" style="left:145px;top:6px;color:#000;letter-spacing:-0.208px;">Elev. angle=-0.551°</div>
<div style="position:absolute;left:278px;top:6px;width:135px;height:14px;background:#a0f8a0;"></div>
<div id="t2" class="t" style="left:281px;top:6px;color:#000;letter-spacing:-0.200px;">Clearance at 40.14km</div>
<div style="position:absolute;left:413px;top:6px;width:136px;height:14px;background:#dcf8a0;"></div>
<div id="t3" class="t" style="left:416px;top:6px;color:#000;letter-spacing:-0.158px;">Worst Fresnel=0.2F1</div>
<div style="position:absolute;left:549px;top:6px;width:136px;height:14px;background:#a0f8a0;"></div>
<div id="t4" class="t" style="left:552px;top:6px;color:#000;letter-spacing:-0.247px;">Distance=43.16km</div>
<div style="position:absolute;left:6px;top:20px;width:136px;height:15px;background:#dcf8a0;"></div>
<div id="t5" class="t" style="left:9px;top:20px;color:#000;letter-spacing:-0.136px;">Free Space=121.1 dB</div>
<div style="position:absolute;left:142px;top:20px;width:136px;height:15px;background:#a0f8a0;"></div>
<div id="t6" class="t" style="left:145px;top:20px;color:#000;letter-spacing:-0.145px;">Obstruction=7.7 dB TR</div>
<div style="position:absolute;left:278px;top:20px;width:135px;height:15px;background:#dcf8a0;"></div>
<div id="t7" class="t" style="left:281px;top:20px;color:#000;letter-spacing:-0.225px;">Urban=3.0 dB</div>
<div style="position:absolute;left:413px;top:20px;width:136px;height:15px;background:#a0f8a0;"></div>
<div id="t8" class="t" style="left:416px;top:20px;color:#000;letter-spacing:-0.213px;">Forest=1.0 dB</div>
<div style="position:absolute;left:549px;top:20px;width:136px;height:15px;background:#dcf8a0;"></div>
<div id="t9" class="t" style="left:552px;top:20px;color:#000;letter-spacing:-0.124px;">Statistics=3.5 dB</div>
<div style="position:absolute;left:6px;top:35px;width:136px;height:14px;background:#a0f8a0;"></div>
<div id="t10" class="t" style="left:9px;top:35px;color:#000;letter-spacing:-0.166px;">PathLoss=136.3dB</div>
<div style="position:absolute;left:142px;top:35px;width:136px;height:14px;background:#dcf8a0;"></div>
<div id="t11" class="t" style="left:145px;top:35px;color:#000;letter-spacing:-0.221px;">E field=81.4dBµV/m</div>
<div style="position:absolute;left:278px;top:35px;width:135px;height:14px;background:#a0f8a0;"></div>
<div id="t12" class="t" style="left:281px;top:35px;color:#000;letter-spacing:-0.180px;">Rx level=-48.3dBm</div>
<div style="position:absolute;left:413px;top:35px;width:136px;height:14px;background:#dcf8a0;"></div>
<div id="t13" class="t" style="left:416px;top:35px;color:#000;letter-spacing:-0.174px;">Rx level=857.18µV</div>
<div style="position:absolute;left:549px;top:35px;width:136px;height:14px;background:#a0f8a0;"></div>
<div id="t14" class="t" style="left:552px;top:35px;color:#000;letter-spacing:-0.226px;">Rx Relative=21.7dB</div>
<div style="position:absolute;left:280px;top:50px;width:132px;height:14px;background:#d4d0c8;"></div>
<div id="t15" class="t" style="left:280px;top:51px;color:#000;letter-spacing:-0.224px;">55°25'55.9"N 037°33'55.6"E</div>
<div style="position:absolute;left:4px;top:208px;width:337px;height:187px;border:1px solid #fff"></div>
<div style="position:absolute;left:3px;top:207px;width:337px;height:187px;border:1px solid #808080"></div>
<div style="position:absolute;left:10px;top:201px;width:193px;height:13px;background:#d4d0c8;"></div>
<div id="t16" class="t" style="left:12px;top:201px;color:#000;">Transmitter 55°49'10.8"N 037°36'41.9"E</div>
<div style="position:absolute;left:11px;top:221px;width:277px;height:10px;background:#ffffff;"></div>
<div style="position:absolute;left:11px;top:221px;width:276px;height:9px;background:#808080;"></div>
<div style="position:absolute;left:12px;top:222px;width:275px;height:8px;background:#d4d0c8;"></div>
<div style="position:absolute;left:12px;top:222px;width:274px;height:7px;background:#404040;"></div>
<div style="position:absolute;left:13px;top:223px;width:273px;height:6px;background:#d4d0c8;"></div>
<div style="position:absolute;left:16px;top:224px;width:18px;height:4px;background:#008000;"></div>
<div style="position:absolute;left:38px;top:224px;width:18px;height:4px;background:#008000;"></div>
<div style="position:absolute;left:61px;top:224px;width:18px;height:4px;background:#008000;"></div>
<div style="position:absolute;left:83px;top:224px;width:18px;height:4px;background:#008000;"></div>
<div style="position:absolute;left:105px;top:224px;width:18px;height:4px;background:#008000;"></div>
<div style="position:absolute;left:128px;top:224px;width:18px;height:4px;background:#008000;"></div>
<div style="position:absolute;left:150px;top:224px;width:18px;height:4px;background:#008000;"></div>
<div style="position:absolute;left:173px;top:224px;width:18px;height:4px;background:#008000;"></div>
<div style="position:absolute;left:195px;top:224px;width:18px;height:4px;background:#008000;"></div>
<div style="position:absolute;left:217px;top:224px;width:18px;height:4px;background:#800000;"></div>
<div style="position:absolute;left:240px;top:224px;width:18px;height:4px;background:#800000;"></div>
<div style="position:absolute;left:262px;top:224px;width:18px;height:4px;background:#800000;"></div>
<div id="t17" class="t" style="left:299px;top:220px;color:#ff0000;">S0</div>
<div style="position:absolute;left:11px;top:237px;width:325px;height:22px;background:#ffffff;"></div>
<div style="position:absolute;left:11px;top:237px;width:324px;height:21px;background:#808080;"></div>
<div style="position:absolute;left:12px;top:238px;width:323px;height:20px;background:#d4d0c8;"></div>
<div style="position:absolute;left:12px;top:238px;width:322px;height:19px;background:#404040;"></div>
<div style="position:absolute;left:13px;top:239px;width:321px;height:18px;background:#fff;"></div>
<div style="position:absolute;left:318px;top:239px;width:16px;height:18px;background:#404040;"></div>
<div style="position:absolute;left:318px;top:239px;width:15px;height:17px;background:#d4d0c8;"></div>
<div style="position:absolute;left:319px;top:240px;width:14px;height:16px;background:#808080;"></div>
<div style="position:absolute;left:319px;top:240px;width:13px;height:15px;background:#ffffff;"></div>
<div style="position:absolute;left:320px;top:241px;width:12px;height:14px;background:#d4d0c8;"></div>
<div style="position:absolute;left:322px;top:246px;width:7px;height:1px;background:#000;"></div>
<div style="position:absolute;left:323px;top:247px;width:5px;height:1px;background:#000;"></div>
<div style="position:absolute;left:324px;top:248px;width:3px;height:1px;background:#000;"></div>
<div style="position:absolute;left:325px;top:249px;width:1px;height:1px;background:#000;"></div>
<div id="t18" class="t" style="left:15px;top:242px;color:#000;">Ostankino</div>
<div id="t19" class="t" style="left:11px;top:263px;color:#000;letter-spacing:-0.580px;">Role</div>
<div id="t20" class="t" style="left:151px;top:262px;color:#0000d0;letter-spacing:-0.220px;">Master</div>
<div id="t21" class="t" style="left:11px;top:282px;color:#000;letter-spacing:-0.127px;">Tx system name</div>
<div style="position:absolute;left:151px;top:277px;width:185px;height:22px;background:#ffffff;"></div>
<div style="position:absolute;left:151px;top:277px;width:184px;height:21px;background:#808080;"></div>
<div style="position:absolute;left:152px;top:278px;width:183px;height:20px;background:#d4d0c8;"></div>
<div style="position:absolute;left:152px;top:278px;width:182px;height:19px;background:#404040;"></div>
<div style="position:absolute;left:153px;top:279px;width:181px;height:18px;background:#fff;"></div>
<div style="position:absolute;left:318px;top:279px;width:16px;height:18px;background:#404040;"></div>
<div style="position:absolute;left:318px;top:279px;width:15px;height:17px;background:#d4d0c8;"></div>
<div style="position:absolute;left:319px;top:280px;width:14px;height:16px;background:#808080;"></div>
<div style="position:absolute;left:319px;top:280px;width:13px;height:15px;background:#ffffff;"></div>
<div style="position:absolute;left:320px;top:281px;width:12px;height:14px;background:#d4d0c8;"></div>
<div style="position:absolute;left:322px;top:286px;width:7px;height:1px;background:#000;"></div>
<div style="position:absolute;left:323px;top:287px;width:5px;height:1px;background:#000;"></div>
<div style="position:absolute;left:324px;top:288px;width:3px;height:1px;background:#000;"></div>
<div style="position:absolute;left:325px;top:289px;width:1px;height:1px;background:#000;"></div>
<div id="t22" class="t" style="left:155px;top:282px;color:#000;letter-spacing:-0.246px;">System&nbsp;&nbsp;&nbsp;1</div>
<div id="t23" class="t" style="left:11px;top:300px;color:#000;letter-spacing:0.249px;">Tx power</div>
<div id="t24" class="t" style="left:151px;top:300px;color:#0000d0;letter-spacing:-0.280px;">10 kW</div>
<div id="t25" class="t" style="left:251px;top:300px;color:#0000d0;letter-spacing:-0.400px;">70 dBm</div>
<div id="t26" class="t" style="left:11px;top:316px;color:#000;letter-spacing:-0.116px;">Line loss</div>
<div id="t27" class="t" style="left:151px;top:316px;color:#0000d0;letter-spacing:-0.220px;">1.5 dB</div>
<div id="t28" class="t" style="left:11px;top:332px;color:#000;letter-spacing:-0.099px;">Antenna gain</div>
<div id="t29" class="t" style="left:151px;top:332px;color:#0000d0;letter-spacing:-0.260px;">16 dBi</div>
<div id="t30" class="t" style="left:251px;top:332px;color:#0000d0;letter-spacing:-0.180px;">13.8 dBd</div>
<div id="t31" class="t" style="left:11px;top:348px;color:#000;letter-spacing:-0.042px;">Radiated power</div>
<div id="t32" class="t" style="left:151px;top:348px;color:#0000d0;letter-spacing:-0.580px;">EIRP=281.84 kW</div>
<div id="t33" class="t" style="left:251px;top:348px;color:#0000d0;letter-spacing:-0.521px;">ERP=171.85 kW</div>
<div style="position:absolute;left:315px;top:327px;width:19px;height:19px;background:#404040;"></div>
<div style="position:absolute;left:315px;top:327px;width:18px;height:18px;background:#ffffff;"></div>
<div style="position:absolute;left:316px;top:328px;width:17px;height:17px;background:#808080;"></div>
<div style="position:absolute;left:316px;top:328px;width:16px;height:16px;background:#d4d0c8;"></div>
<div style="position:absolute;left:317px;top:329px;width:15px;height:15px;background:#d4d0c8;"></div>
<div class="t" style="left:315px;width:19px;text-align:center;top:330px;color:#000">+</div>
<div id="t34" class="t" style="left:11px;top:372px;color:#000;letter-spacing:-0.062px;">Antenna height (m)</div>
<div style="position:absolute;left:150px;top:367px;width:53px;height:19px;background:#ffffff;"></div>
<div style="position:absolute;left:150px;top:367px;width:52px;height:18px;background:#808080;"></div>
<div style="position:absolute;left:151px;top:368px;width:51px;height:17px;background:#d4d0c8;"></div>
<div style="position:absolute;left:151px;top:368px;width:50px;height:16px;background:#404040;"></div>
<div style="position:absolute;left:152px;top:369px;width:49px;height:15px;background:#fff;"></div>
<div id="t35" class="t" style="left:153px;top:370px;color:#000;">400</div>
<div style="position:absolute;left:210px;top:367px;width:19px;height:19px;background:#404040;"></div>
<div style="position:absolute;left:210px;top:367px;width:18px;height:18px;background:#ffffff;"></div>
<div style="position:absolute;left:211px;top:368px;width:17px;height:17px;background:#808080;"></div>
<div style="position:absolute;left:211px;top:368px;width:16px;height:16px;background:#d4d0c8;"></div>
<div style="position:absolute;left:212px;top:369px;width:15px;height:15px;background:#d4d0c8;"></div>
<div class="t" style="left:210px;width:19px;text-align:center;top:370px;color:#000">-</div>
<div style="position:absolute;left:235px;top:367px;width:19px;height:19px;background:#404040;"></div>
<div style="position:absolute;left:235px;top:367px;width:18px;height:18px;background:#ffffff;"></div>
<div style="position:absolute;left:236px;top:368px;width:17px;height:17px;background:#808080;"></div>
<div style="position:absolute;left:236px;top:368px;width:16px;height:16px;background:#d4d0c8;"></div>
<div style="position:absolute;left:237px;top:369px;width:15px;height:15px;background:#d4d0c8;"></div>
<div class="t" style="left:235px;width:19px;text-align:center;top:370px;color:#000">+</div>
<div style="position:absolute;left:262px;top:364px;width:73px;height:27px;background:#404040;"></div>
<div style="position:absolute;left:262px;top:364px;width:72px;height:26px;background:#ffffff;"></div>
<div style="position:absolute;left:263px;top:365px;width:71px;height:25px;background:#808080;"></div>
<div style="position:absolute;left:263px;top:365px;width:70px;height:24px;background:#d4d0c8;"></div>
<div style="position:absolute;left:264px;top:366px;width:69px;height:23px;background:#d4d0c8;"></div>
<div class="t" style="left:262px;width:73px;text-align:center;top:372px;color:#fff;padding-left:1px">Undo</div>
<div class="t" style="left:262px;width:73px;text-align:center;top:371px;color:#808080">Undo</div>
<div style="position:absolute;left:349px;top:208px;width:337px;height:187px;border:1px solid #fff"></div>
<div style="position:absolute;left:348px;top:207px;width:337px;height:187px;border:1px solid #808080"></div>
<div style="position:absolute;left:355px;top:201px;width:182px;height:13px;background:#d4d0c8;"></div>
<div id="t36" class="t" style="left:357px;top:201px;color:#000;">Receiver 55°25'55.9"N 037°33'55.6"E</div>
<div style="position:absolute;left:356px;top:221px;width:277px;height:10px;background:#ffffff;"></div>
<div style="position:absolute;left:356px;top:221px;width:276px;height:9px;background:#808080;"></div>
<div style="position:absolute;left:357px;top:222px;width:275px;height:8px;background:#d4d0c8;"></div>
<div style="position:absolute;left:357px;top:222px;width:274px;height:7px;background:#404040;"></div>
<div style="position:absolute;left:358px;top:223px;width:273px;height:6px;background:#d4d0c8;"></div>
<div style="position:absolute;left:361px;top:224px;width:18px;height:4px;background:#00ff00;"></div>
<div style="position:absolute;left:383px;top:224px;width:18px;height:4px;background:#00ff00;"></div>
<div style="position:absolute;left:406px;top:224px;width:18px;height:4px;background:#00ff00;"></div>
<div style="position:absolute;left:428px;top:224px;width:18px;height:4px;background:#00ff00;"></div>
<div style="position:absolute;left:450px;top:224px;width:18px;height:4px;background:#00ff00;"></div>
<div style="position:absolute;left:473px;top:224px;width:18px;height:4px;background:#00ff00;"></div>
<div style="position:absolute;left:495px;top:224px;width:18px;height:4px;background:#00ff00;"></div>
<div style="position:absolute;left:518px;top:224px;width:18px;height:4px;background:#00ff00;"></div>
<div style="position:absolute;left:540px;top:224px;width:18px;height:4px;background:#008000;"></div>
<div style="position:absolute;left:562px;top:224px;width:18px;height:4px;background:#800000;"></div>
<div style="position:absolute;left:585px;top:224px;width:18px;height:4px;background:#800000;"></div>
<div style="position:absolute;left:607px;top:224px;width:18px;height:4px;background:#800000;"></div>
<div id="t37" class="t" style="left:644px;top:220px;color:#000;">S8</div>
<div style="position:absolute;left:356px;top:237px;width:325px;height:22px;background:#ffffff;"></div>
<div style="position:absolute;left:356px;top:237px;width:324px;height:21px;background:#808080;"></div>
<div style="position:absolute;left:357px;top:238px;width:323px;height:20px;background:#d4d0c8;"></div>
<div style="position:absolute;left:357px;top:238px;width:322px;height:19px;background:#404040;"></div>
<div style="position:absolute;left:358px;top:239px;width:321px;height:18px;background:#fff;"></div>
<div style="position:absolute;left:663px;top:239px;width:16px;height:18px;background:#404040;"></div>
<div style="position:absolute;left:663px;top:239px;width:15px;height:17px;background:#d4d0c8;"></div>
<div style="position:absolute;left:664px;top:240px;width:14px;height:16px;background:#808080;"></div>
<div style="position:absolute;left:664px;top:240px;width:13px;height:15px;background:#ffffff;"></div>
<div style="position:absolute;left:665px;top:241px;width:12px;height:14px;background:#d4d0c8;"></div>
<div style="position:absolute;left:667px;top:246px;width:7px;height:1px;background:#000;"></div>
<div style="position:absolute;left:668px;top:247px;width:5px;height:1px;background:#000;"></div>
<div style="position:absolute;left:669px;top:248px;width:3px;height:1px;background:#000;"></div>
<div style="position:absolute;left:670px;top:249px;width:1px;height:1px;background:#000;"></div>
<div id="t38" class="t" style="left:360px;top:242px;color:#000;">Podolsk</div>
<div id="t39" class="t" style="left:356px;top:263px;color:#000;letter-spacing:-0.480px;">Role</div>
<div id="t40" class="t" style="left:496px;top:262px;color:#0000d0;letter-spacing:-0.305px;">Slave</div>
<div id="t41" class="t" style="left:356px;top:282px;color:#000;letter-spacing:-0.172px;">Rx system name</div>
<div style="position:absolute;left:496px;top:277px;width:185px;height:22px;background:#ffffff;"></div>
<div style="position:absolute;left:496px;top:277px;width:184px;height:21px;background:#808080;"></div>
<div style="position:absolute;left:497px;top:278px;width:183px;height:20px;background:#d4d0c8;"></div>
<div style="position:absolute;left:497px;top:278px;width:182px;height:19px;background:#404040;"></div>
<div style="position:absolute;left:498px;top:279px;width:181px;height:18px;background:#fff;"></div>
<div style="position:absolute;left:663px;top:279px;width:16px;height:18px;background:#404040;"></div>
<div style="position:absolute;left:663px;top:279px;width:15px;height:17px;background:#d4d0c8;"></div>
<div style="position:absolute;left:664px;top:280px;width:14px;height:16px;background:#808080;"></div>
<div style="position:absolute;left:664px;top:280px;width:13px;height:15px;background:#ffffff;"></div>
<div style="position:absolute;left:665px;top:281px;width:12px;height:14px;background:#d4d0c8;"></div>
<div style="position:absolute;left:667px;top:286px;width:7px;height:1px;background:#000;"></div>
<div style="position:absolute;left:668px;top:287px;width:5px;height:1px;background:#000;"></div>
<div style="position:absolute;left:669px;top:288px;width:3px;height:1px;background:#000;"></div>
<div style="position:absolute;left:670px;top:289px;width:1px;height:1px;background:#000;"></div>
<div id="t42" class="t" style="left:500px;top:282px;color:#000;letter-spacing:-0.135px;">System&nbsp;&nbsp;&nbsp;2</div>
<div id="t43" class="t" style="left:356px;top:300px;color:#000;letter-spacing:-0.407px;">Required E Field</div>
<div id="t44" class="t" style="left:496px;top:300px;color:#0000d0;letter-spacing:-0.180px;">59.7 dBµV/m</div>
<div id="t45" class="t" style="left:356px;top:316px;color:#000;letter-spacing:-0.106px;">Antenna gain</div>
<div id="t46" class="t" style="left:496px;top:316px;color:#0000d0;letter-spacing:-0.155px;">4 dBi</div>
<div id="t47" class="t" style="left:596px;top:316px;color:#0000d0;letter-spacing:-0.180px;">1.8 dBd</div>
<div id="t48" class="t" style="left:356px;top:332px;color:#000;letter-spacing:-0.116px;">Line loss</div>
<div id="t49" class="t" style="left:496px;top:332px;color:#0000d0;letter-spacing:-0.280px;">0.5 dB</div>
<div id="t50" class="t" style="left:356px;top:348px;color:#000;letter-spacing:-0.026px;">Rx sensitivity</div>
<div id="t51" class="t" style="left:496px;top:348px;color:#0000d0;letter-spacing:-0.194px;">70.7946µV</div>
<div id="t52" class="t" style="left:596px;top:348px;color:#0000d0;letter-spacing:-0.197px;">-70 dBm</div>
<div style="position:absolute;left:660px;top:311px;width:19px;height:19px;background:#404040;"></div>
<div style="position:absolute;left:660px;top:311px;width:18px;height:18px;background:#ffffff;"></div>
<div style="position:absolute;left:661px;top:312px;width:17px;height:17px;background:#808080;"></div>
<div style="position:absolute;left:661px;top:312px;width:16px;height:16px;background:#d4d0c8;"></div>
<div style="position:absolute;left:662px;top:313px;width:15px;height:15px;background:#d4d0c8;"></div>
<div class="t" style="left:660px;width:19px;text-align:center;top:314px;color:#000">+</div>
<div id="t53" class="t" style="left:356px;top:372px;color:#000;letter-spacing:-0.098px;">Antenna height (m)</div>
<div style="position:absolute;left:495px;top:367px;width:53px;height:19px;background:#ffffff;"></div>
<div style="position:absolute;left:495px;top:367px;width:52px;height:18px;background:#808080;"></div>
<div style="position:absolute;left:496px;top:368px;width:51px;height:17px;background:#d4d0c8;"></div>
<div style="position:absolute;left:496px;top:368px;width:50px;height:16px;background:#404040;"></div>
<div style="position:absolute;left:497px;top:369px;width:49px;height:15px;background:#a0f8a0;"></div>
<div id="t54" class="t" style="left:498px;top:370px;color:#000;">5</div>
<div style="position:absolute;left:555px;top:367px;width:19px;height:19px;background:#404040;"></div>
<div style="position:absolute;left:555px;top:367px;width:18px;height:18px;background:#ffffff;"></div>
<div style="position:absolute;left:556px;top:368px;width:17px;height:17px;background:#808080;"></div>
<div style="position:absolute;left:556px;top:368px;width:16px;height:16px;background:#d4d0c8;"></div>
<div style="position:absolute;left:557px;top:369px;width:15px;height:15px;background:#d4d0c8;"></div>
<div class="t" style="left:555px;width:19px;text-align:center;top:370px;color:#000">-</div>
<div style="position:absolute;left:580px;top:367px;width:19px;height:19px;background:#404040;"></div>
<div style="position:absolute;left:580px;top:367px;width:18px;height:18px;background:#ffffff;"></div>
<div style="position:absolute;left:581px;top:368px;width:17px;height:17px;background:#808080;"></div>
<div style="position:absolute;left:581px;top:368px;width:16px;height:16px;background:#d4d0c8;"></div>
<div style="position:absolute;left:582px;top:369px;width:15px;height:15px;background:#d4d0c8;"></div>
<div class="t" style="left:580px;width:19px;text-align:center;top:370px;color:#000">+</div>
<div style="position:absolute;left:607px;top:364px;width:73px;height:27px;background:#404040;"></div>
<div style="position:absolute;left:607px;top:364px;width:72px;height:26px;background:#ffffff;"></div>
<div style="position:absolute;left:608px;top:365px;width:71px;height:25px;background:#808080;"></div>
<div style="position:absolute;left:608px;top:365px;width:70px;height:24px;background:#d4d0c8;"></div>
<div style="position:absolute;left:609px;top:366px;width:69px;height:23px;background:#d4d0c8;"></div>
<div class="t" style="left:607px;width:73px;text-align:center;top:372px;color:#fff;padding-left:1px">Undo</div>
<div class="t" style="left:607px;width:73px;text-align:center;top:371px;color:#808080">Undo</div>
<div style="position:absolute;left:4px;top:408px;width:337px;height:47px;border:1px solid #fff"></div>
<div style="position:absolute;left:3px;top:407px;width:337px;height:47px;border:1px solid #808080"></div>
<div style="position:absolute;left:10px;top:401px;width:20px;height:13px;background:#d4d0c8;"></div>
<div id="t55" class="t" style="left:12px;top:401px;color:#000;">Net</div>
<div style="position:absolute;left:11px;top:426px;width:325px;height:22px;background:#ffffff;"></div>
<div style="position:absolute;left:11px;top:426px;width:324px;height:21px;background:#808080;"></div>
<div style="position:absolute;left:12px;top:427px;width:323px;height:20px;background:#d4d0c8;"></div>
<div style="position:absolute;left:12px;top:427px;width:322px;height:19px;background:#404040;"></div>
<div style="position:absolute;left:13px;top:428px;width:321px;height:18px;background:#fff;"></div>
<div style="position:absolute;left:318px;top:428px;width:16px;height:18px;background:#404040;"></div>
<div style="position:absolute;left:318px;top:428px;width:15px;height:17px;background:#d4d0c8;"></div>
<div style="position:absolute;left:319px;top:429px;width:14px;height:16px;background:#808080;"></div>
<div style="position:absolute;left:319px;top:429px;width:13px;height:15px;background:#ffffff;"></div>
<div style="position:absolute;left:320px;top:430px;width:12px;height:14px;background:#d4d0c8;"></div>
<div style="position:absolute;left:322px;top:435px;width:7px;height:1px;background:#000;"></div>
<div style="position:absolute;left:323px;top:436px;width:5px;height:1px;background:#000;"></div>
<div style="position:absolute;left:324px;top:437px;width:3px;height:1px;background:#000;"></div>
<div style="position:absolute;left:325px;top:438px;width:1px;height:1px;background:#000;"></div>
<div id="t56" class="t" style="left:15px;top:430px;color:#000;">Ostankino</div>
<div style="position:absolute;left:349px;top:408px;width:337px;height:47px;border:1px solid #fff"></div>
<div style="position:absolute;left:348px;top:407px;width:337px;height:47px;border:1px solid #808080"></div>
<div style="position:absolute;left:355px;top:401px;width:89px;height:13px;background:#d4d0c8;"></div>
<div id="t57" class="t" style="left:357px;top:401px;color:#000;letter-spacing:-0.037px;">Frequency (MHz)</div>
<div id="t58" class="t" style="left:388px;top:425px;color:#000;letter-spacing:-0.697px;">Minimum</div>
<div style="position:absolute;left:436px;top:424px;width:81px;height:19px;background:#ffffff;"></div>
<div style="position:absolute;left:436px;top:424px;width:80px;height:18px;background:#808080;"></div>
<div style="position:absolute;left:437px;top:425px;width:79px;height:17px;background:#d4d0c8;"></div>
<div style="position:absolute;left:437px;top:425px;width:78px;height:16px;background:#404040;"></div>
<div style="position:absolute;left:438px;top:426px;width:77px;height:15px;background:#fff;"></div>
<div id="t59" class="t" style="left:439px;top:427px;color:#000;">470</div>
<div id="t60" class="t" style="left:543px;top:425px;color:#000;letter-spacing:-0.613px;">Maximum</div>
<div style="position:absolute;left:599px;top:424px;width:81px;height:19px;background:#ffffff;"></div>
<div style="position:absolute;left:599px;top:424px;width:80px;height:18px;background:#808080;"></div>
<div style="position:absolute;left:600px;top:425px;width:79px;height:17px;background:#d4d0c8;"></div>
<div style="position:absolute;left:600px;top:425px;width:78px;height:16px;background:#404040;"></div>
<div style="position:absolute;left:601px;top:426px;width:77px;height:15px;background:#fff;"></div>
<div id="t61" class="t" style="left:602px;top:427px;color:#000;">790</div>
</body></html>
